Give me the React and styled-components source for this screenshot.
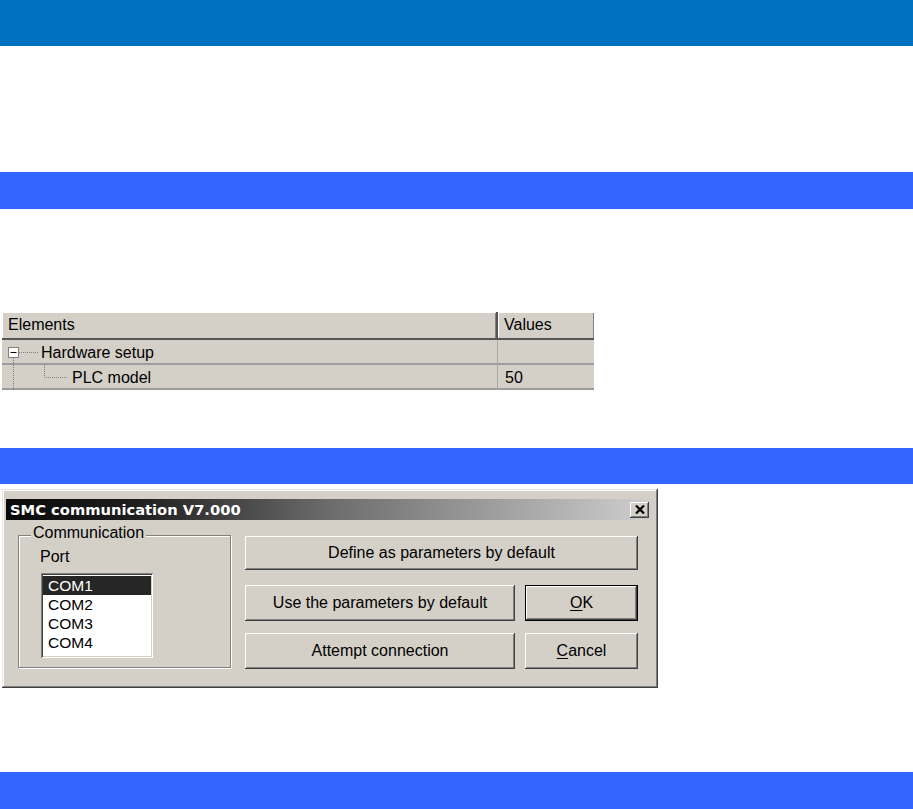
import React from "react";
import styled, { createGlobalStyle } from "styled-components";

const Global = createGlobalStyle`
  html, body { margin: 0; padding: 0; background: #ffffff; }
  body { font-family: "Liberation Sans", Arial, sans-serif; color: #000; }
  * { box-sizing: border-box; }
`;

const Page = styled.div`
  width: 913px;
  overflow: hidden;
`;

const Bar = styled.div`
  height: ${(p) => p.$h}px;
  margin-top: ${(p) => p.$mt || 0}px;
  background: ${(p) => p.$c};
`;

/* ---------- property table ---------- */
const Table = styled.div`
  margin: 103px 0 0 2px;
  width: 592px;
  background: #d4d0c8;
  font-size: 16px;
`;

const HeaderRow = styled.div`
  display: grid;
  grid-template-columns: 496px 96px;
  height: 28px;
  border-bottom: 2px solid #555;
`;

const HeaderCell = styled.div`
  display: flex;
  align-items: center;
  padding-left: ${(p) => p.$pl}px;
  box-shadow: inset 1px 1px 0 #ffffff, inset -1px 0 0 #808080;
  border-right: ${(p) => (p.$divider ? "2px solid #555" : "none")};
`;

const Row = styled.div`
  display: grid;
  grid-template-columns: 496px 96px;
  height: 25px;
  border-bottom: 2px solid #9c9c9c;
`;

const Cell = styled.div`
  display: flex;
  align-items: center;
  padding-left: ${(p) => p.$pl || 0}px;
  border-right: ${(p) => (p.$divider ? "1px solid #a8a8a8" : "none")};
  white-space: nowrap;
`;

const TreeLabel = styled.span`
  margin-left: ${(p) => p.$ml}px;
`;

/* ---------- dialog ---------- */
const Window = styled.div`
  margin: 5px 0 0 2px;
  width: 656px;
  height: 199px;
  background: #d4d0c8;
  padding: 10px 4px 4px 4px;
  box-shadow: inset -1px -1px 0 #404040, inset 1px 1px 0 #e6e4df,
    inset -2px -2px 0 #808080, inset 2px 2px 0 #ffffff;
`;

const TitleBar = styled.div`
  height: 21px;
  display: flex;
  align-items: center;
  justify-content: space-between;
  padding: 0 5px 0 4px;
  background: linear-gradient(to right, #0a0a0a 0%, #1e1e1e 20%, #6c6c6c 50%, #cfcfcf 100%);
`;

const TitleText = styled.span`
  font-family: "DejaVu Sans", Verdana, sans-serif;
  font-weight: bold;
  font-size: 14.7px;
  color: #ffffff;
  white-space: nowrap;
`;

const CloseButton = styled.div`
  width: 19px;
  height: 16px;
  background: #d4d0c8;
  display: flex;
  align-items: center;
  justify-content: center;
  box-shadow: inset -1px -1px 0 #404040, inset 1px 1px 0 #ffffff,
    inset -2px -2px 0 #808080;
`;

const Body = styled.div`
  display: flex;
  align-items: flex-start;
  gap: 14px;
  padding: 15px 0 0 12px;
  font-size: 16px;
`;

const Group = styled.div`
  position: relative;
  width: 213px;
  height: 133px;
  border: 1px solid #808080;
  box-shadow: 1px 1px 0 #ffffff, inset 1px 1px 0 #ffffff;
  padding: 12px 0 0 21px;
`;

const Legend = styled.span`
  position: absolute;
  top: -12px;
  left: 12px;
  padding: 0 2px;
  line-height: 18px;
  background: #d4d0c8;
`;

const FieldLabel = styled.div`
  line-height: 18px;
`;

const ListBox = styled.div`
  margin: 7px 0 0 1px;
  width: 112px;
  height: 85px;
  background: #ffffff;
  padding: 3px 2px;
  box-shadow: inset 1px 1px 0 #808080, inset -1px -1px 0 #ffffff,
    inset 2px 2px 0 #404040, inset -2px -2px 0 #d4d0c8;
`;

const ListItem = styled.div`
  height: 19px;
  line-height: 19px;
  padding-left: 5px;
  font-size: 15.5px;
  background: ${(p) => (p.$selected ? "#262626" : "transparent")};
  color: ${(p) => (p.$selected ? "#ffffff" : "#000000")};
`;

const ButtonGrid = styled.div`
  margin-top: 1px;
  display: grid;
  grid-template-columns: 270px 113px;
  grid-template-rows: 37px 36px 36px;
  column-gap: 10px;
  row-gap: 12px;
`;

const Button = styled.button`
  font-family: "Liberation Sans", Arial, sans-serif;
  font-size: 16px;
  color: #000;
  background: #d4d0c8;
  border: none;
  padding: 0;
  height: ${(p) => p.$h || 36}px;
  align-self: start;
  grid-column: ${(p) => (p.$wide ? "1 / -1" : "auto")};
  box-shadow: ${(p) =>
    p.$default
      ? "inset 0 0 0 1px #000, inset -2px -2px 0 #404040, inset 2px 2px 0 #ffffff, inset -3px -3px 0 #808080"
      : "inset -1px -1px 0 #404040, inset 1px 1px 0 #ffffff, inset -2px -2px 0 #808080, inset 2px 2px 0 #d4d0c8"};
  u { text-decoration: underline; text-underline-offset: 2px; }
`;

const CloseIcon = () => (
  <svg width="10" height="9" viewBox="0 0 10 9">
    <path d="M1 0.5 L9 8.5 M9 0.5 L1 8.5" stroke="#000" strokeWidth="2.2" />
  </svg>
);

const TreeRoot = () => (
  <svg width="36" height="25" viewBox="0 0 36 25">
    <rect x="6.5" y="7.5" width="10" height="10" fill="#fff" stroke="#808080" />
    <path d="M8.5 12.5 H14.5" stroke="#000" />
    <path d="M17 12.5 H36" stroke="#808080" strokeDasharray="1 1" />
    <path d="M11.5 18 V25" stroke="#808080" strokeDasharray="1 1" />
  </svg>
);

const TreeChild = () => (
  <svg width="68" height="25" viewBox="0 0 68 25">
    <path d="M11.5 0 V25" stroke="#808080" strokeDasharray="1 1" />
    <path d="M42.5 0 V12.5 H66" stroke="#808080" strokeDasharray="1 1" fill="none" />
  </svg>
);

export default function App() {
  return (
    <Page>
      <Global />
      <Bar $h={46} $c="#0070C0" />
      <Bar $h={37} $mt={126} $c="#3366FF" />

      <Table>
        <HeaderRow>
          <HeaderCell $pl={6} $divider>Elements</HeaderCell>
          <HeaderCell $pl={6}>Values</HeaderCell>
        </HeaderRow>
        <Row>
          <Cell $divider>
            <TreeRoot />
            <TreeLabel $ml={3}>Hardware setup</TreeLabel>
          </Cell>
          <Cell $pl={7}></Cell>
        </Row>
        <Row>
          <Cell $divider>
            <TreeChild />
            <TreeLabel $ml={2}>PLC model</TreeLabel>
          </Cell>
          <Cell $pl={7}>50</Cell>
        </Row>
      </Table>

      <Bar $h={36} $mt={58} $c="#3366FF" />

      <Window>
        <TitleBar>
          <TitleText>SMC communication V7.000</TitleText>
          <CloseButton>
            <CloseIcon />
          </CloseButton>
        </TitleBar>
        <Body>
          <Group>
            <Legend>Communication</Legend>
            <FieldLabel>Port</FieldLabel>
            <ListBox>
              <ListItem $selected>COM1</ListItem>
              <ListItem>COM2</ListItem>
              <ListItem>COM3</ListItem>
              <ListItem>COM4</ListItem>
            </ListBox>
          </Group>
          <ButtonGrid>
            <Button $wide $h={34}>Define as parameters by default</Button>
            <Button>Use the parameters by default</Button>
            <Button $default>
              <u>O</u>K
            </Button>
            <Button>Attempt connection</Button>
            <Button>
              <u>C</u>ancel
            </Button>
          </ButtonGrid>
        </Body>
      </Window>

      <Bar $h={37} $mt={84} $c="#3366FF" />
    </Page>
  );
}
